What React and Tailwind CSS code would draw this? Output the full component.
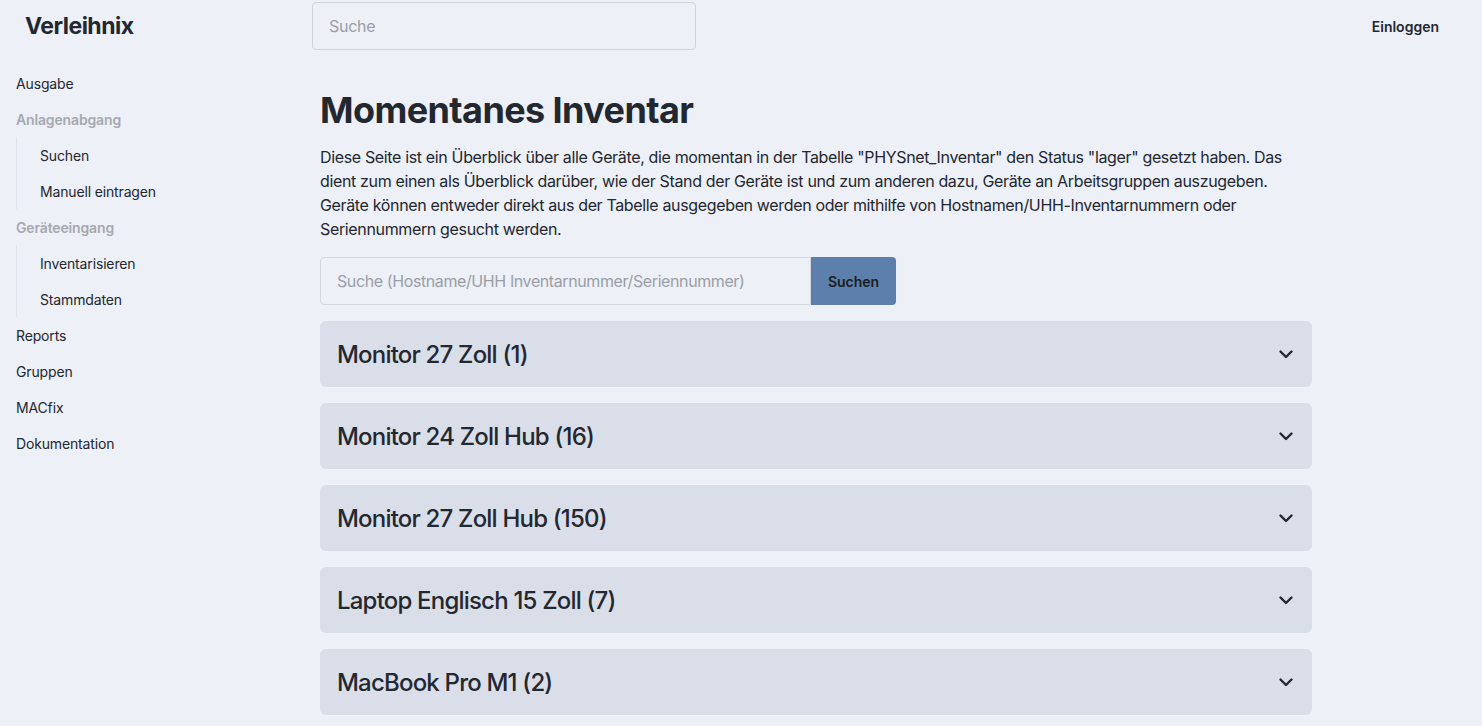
import React from "react";

const Chevron = () => (
  <svg width="24" height="24" viewBox="0 0 24 24" fill="none" stroke="#23272f" strokeWidth="2.4" strokeLinecap="round" strokeLinejoin="round">
    <path d="M6.5 9.5l5.5 5.5 5.5-5.5" />
  </svg>
);

const groups = [
  "Monitor 27 Zoll (1)",
  "Monitor 24 Zoll Hub (16)",
  "Monitor 27 Zoll Hub (150)",
  "Laptop Englisch 15 Zoll (7)",
  "MacBook Pro M1 (2)",
];

export default function App() {
  return (
    <div className="min-h-[726px] bg-[#edf0f7] text-[#23272f] flex" style={{ fontFamily: "Inter, 'Noto Sans', sans-serif" }}>
      <aside className="w-[312px] shrink-0 flex flex-col">
        <div className="h-[52px] flex items-center pl-[25px]">
          <span className="text-[23px] font-bold tracking-[-0.5px]">Verleihnix</span>
        </div>
        <nav className="flex flex-col pl-4 pt-[13px] text-[14px] tracking-[-0.15px]">
          <div className="h-9 flex items-center">Ausgabe</div>
          <div className="h-9 flex items-center font-semibold text-[#a6a9b0]">Anlagenabgang</div>
          <div className="border-l border-[#dfe2ea] pl-[23px] flex flex-col">
            <div className="h-9 flex items-center">Suchen</div>
            <div className="h-9 flex items-center">Manuell eintragen</div>
          </div>
          <div className="h-9 flex items-center font-semibold text-[#a6a9b0]">Geräteeingang</div>
          <div className="border-l border-[#dfe2ea] pl-[23px] flex flex-col">
            <div className="h-9 flex items-center">Inventarisieren</div>
            <div className="h-9 flex items-center">Stammdaten</div>
          </div>
          <div className="h-9 flex items-center">Reports</div>
          <div className="h-9 flex items-center">Gruppen</div>
          <div className="h-9 flex items-center">MACfix</div>
          <div className="h-9 flex items-center">Dokumentation</div>
        </nav>
      </aside>
      <div className="flex-1 flex flex-col">
        <header className="flex items-center justify-between pt-[2px] pr-[43px]">
          <div className="w-[384px] h-[48px] border border-[#cfd3da] rounded-[4px] bg-[#edf0f7] flex items-center px-4 text-[16px] text-[#9a9ea6] tracking-[-0.3px]">
            Suche
          </div>
          <span className="text-[14px] font-semibold">Einloggen</span>
        </header>
        <main className="pl-2 w-[1000px]">
          <h1 className="text-[36px] font-bold mt-[38px] leading-[44px] tracking-[-0.6px]">Momentanes Inventar</h1>
          <p className="mt-[13px] text-[16px] leading-[24px] w-[990px] tracking-[-0.35px]">
            Diese Seite ist ein Überblick über alle Geräte, die momentan in der Tabelle "PHYSnet_Inventar" den Status "lager" gesetzt haben. Das dient zum einen als Überblick darüber, wie der Stand der Geräte ist und zum anderen dazu, Geräte an Arbeitsgruppen auszugeben. Geräte können entweder direkt aus der Tabelle ausgegeben werden oder mithilfe von Hostnamen/UHH-Inventarnummern oder Seriennummern gesucht werden.
          </p>
          <div className="mt-4 flex h-[48px] w-[576px]">
            <div className="flex-1 border border-[#d3d7de] rounded-l-[4px] flex items-center px-4 text-[16px] text-[#9a9ea6] tracking-[-0.4px]">
              Suche (Hostname/UHH Inventarnummer/Seriennummer)
            </div>
            <div className="w-[85px] bg-[#5c7fac] rounded-r-[4px] flex items-center justify-center text-[14px] font-semibold text-[#1a1d23]">
              Suchen
            </div>
          </div>
          <div className="mt-4 flex flex-col gap-4 w-[992px]">
            {groups.map((g) => (
              <div key={g} className="h-[66px] bg-[#d9dee8] rounded-[6px] flex items-center justify-between pl-[17px] pr-[14px]">
                <span className="text-[24px] font-medium tracking-[-0.8px] pt-[2px]">{g}</span>
                <Chevron />
              </div>
            ))}
          </div>
        </main>
      </div>
    </div>
  );
}
